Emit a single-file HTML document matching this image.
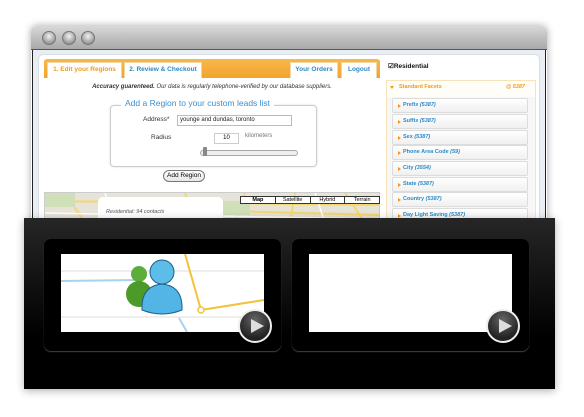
<!DOCTYPE html>
<html><head><style>
*{margin:0;padding:0;box-sizing:border-box}
body{width:584px;height:417px;background:#fff;position:relative;overflow:hidden;font-family:"Liberation Sans",sans-serif}
.abs{position:absolute}
.win{left:31px;top:26px;width:516px;height:200px;border-radius:6px 6px 0 0;box-shadow:0 0 8px rgba(0,0,0,.35);background:#fff}
.title{left:31px;top:26px;width:516px;height:24px;border-radius:6px 6px 0 0;background:linear-gradient(#d8d8d8,#a9a9a9);border-bottom:1px solid #555}
.btn{top:31px;width:14px;height:14px;border-radius:50%;background:radial-gradient(circle at 50% 35%,#f2f2f2,#9a9a9a 70%,#777);border:1px solid #777}
.content{left:32px;top:50px;width:514px;height:170px;background:#e8eef3;border-left:1px solid #222;border-right:1px solid #222}
.panel{left:38px;top:54px;width:502px;height:170px;background:#fff;border-radius:5px;border:1px solid #d7dde3}
.tabbar{left:44px;top:59px;width:336px;height:19px;background:linear-gradient(#f7b84b,#f2a42c);border-radius:3px 3px 0 0}
.tab{top:62px;height:16px;background:#fff;font-size:6.5px;font-weight:bold;color:#2a8ac6;text-align:center;line-height:14px;border:1px solid #f0d6a0;border-bottom:none}
.t{font-size:6.5px;color:#333}
.item{left:392px;width:136px;height:15px;border:1px solid #dcdcdc;border-radius:2px;background:linear-gradient(#fff,#f0f0f0);font-size:5.5px;font-weight:bold;color:#2a8ac6;line-height:13px;padding-left:10px}
.item:before{content:"";position:absolute;left:5px;top:5px;border-left:3px solid #f29a1c;border-top:2px solid transparent;border-bottom:2px solid transparent}
.black{left:24px;top:218px;width:531px;height:171px;background:linear-gradient(#262626,#000 70%);box-shadow:0 2px 8px rgba(0,0,0,.3)}
.vid{top:239px;width:237px;height:112px;background:#000;border-radius:7px;box-shadow:0 1px 1px #444}
.scr{top:254px;width:203px;height:78px;background:#fff}
.play{width:34px;height:34px;border-radius:50%;border:2px solid #eee;background:radial-gradient(circle at 50% 30%,#666,#222 70%)}
.play:after{content:"";position:absolute;left:11px;top:8px;border-left:13px solid #ddd;border-top:7.5px solid transparent;border-bottom:7.5px solid transparent}
</style></head><body>
<div class="abs win"></div>
<div class="abs content"></div>
<div class="abs title"></div>
<div class="abs btn" style="left:42px"></div>
<div class="abs btn" style="left:62px"></div>
<div class="abs btn" style="left:81px"></div>
<div class="abs panel"></div>
<div class="abs tabbar"></div>
<div class="abs tab" style="left:47px;width:75px;color:#f29a1c">1. Edit your Regions</div>
<div class="abs tab" style="left:124px;width:78px">2. Review &amp; Checkout</div>
<div class="abs tab" style="left:290px;width:48px">Your Orders</div>
<div class="abs tab" style="left:341px;width:36px">Logout</div>
<div class="abs t" style="left:44px;top:84px;width:336px;text-align:center;font-size:6px;font-style:italic"><b>Accuracy guarenteed.</b> Our data is regularly telephone-verified by our database suppliers.</div>
<div class="abs" style="left:110px;top:105px;width:207px;height:62px;border:1px solid #ccc;border-radius:4px;box-shadow:0 0 2px #ddd"></div>
<div class="abs" style="left:121px;top:98px;background:#fff;padding:0 4px;font-size:8.5px;color:#3d8fd0">Add a Region to your custom leads list</div>
<div class="abs t" style="left:143px;top:116px">Address*</div>
<div class="abs" style="left:177px;top:115px;width:115px;height:11px;border:1px solid #bbb;font-size:6px;line-height:9px;padding-left:2px;color:#222">younge and dundas, toronto</div>
<div class="abs t" style="left:151px;top:134px">Radius</div>
<div class="abs" style="left:214px;top:133px;width:25px;height:11px;border:1px solid #ccc;font-size:6px;line-height:9px;text-align:center">10</div>
<div class="abs t" style="left:245px;top:133px;color:#777;font-size:6px">kilometers</div>
<div class="abs" style="left:200px;top:150px;width:98px;height:6px;border:1px solid #aaa;border-radius:3px;background:#eee"></div>
<div class="abs" style="left:203px;top:147px;width:4px;height:9px;background:#888;border-radius:1px"></div>
<div class="abs" style="left:163px;top:170px;width:42px;height:12px;border:1px solid #777;border-radius:6px;font-size:6.5px;line-height:10px;text-align:center;background:linear-gradient(#fff,#e6e6e6)">Add Region</div>
<div class="abs" style="left:44px;top:192px;width:336px;height:30px;background:#e6e3d8;border:1px solid #ccc;overflow:hidden">
<svg width="336" height="30"><path d="M0 8 L336 12 M20 0 L40 30 M140 0 L150 30 M200 0 L190 30 M250 0 L245 30 M300 0 L320 30 M180 18 L336 22" stroke="#f5d76a" stroke-width="2" fill="none"/><path d="M0 20 L336 26 M60 0 L70 30 M270 0 L280 30" stroke="#fff" stroke-width="1.5"/><rect x="0" y="0" width="30" height="14" fill="#cfe0b8"/><rect x="175" y="8" width="30" height="14" fill="#cfe0b8"/></svg></div>
<div class="abs" style="left:98px;top:197px;width:125px;height:25px;background:#fff;border-radius:5px;font-size:5.5px;font-style:italic;color:#555;padding:12px 0 0 8px">Residential: 94 contacts</div>
<div class="abs" style="left:240px;top:196px;width:140px;height:8px;background:#fff;border:1px solid #333;font-size:5.5px;display:flex"><span style="flex:1;text-align:center;font-weight:bold;border-right:1px solid #333">Map</span><span style="flex:1;text-align:center;border-right:1px solid #333">Satellite</span><span style="flex:1;text-align:center;border-right:1px solid #333">Hybrid</span><span style="flex:1;text-align:center">Terrain</span></div>
<div class="abs" style="left:388px;top:62px;font-size:6.5px;font-weight:bold;color:#111">☑Residential</div>
<div class="abs" style="left:386px;top:80px;width:150px;height:140px;border:1px solid #f7e3b8;background:#f7f7f7"></div>
<div class="abs" style="left:387px;top:81px;width:148px;height:16px;background:#fffdf7;font-size:5.5px;font-weight:bold;color:#f29a1c;line-height:12px;padding-left:12px">Standard Facets<span style="position:absolute;right:10px;font-style:italic">@ 5387</span></div>
<div class="abs" style="left:390px;top:86px;border-top:3px solid #f29a1c;border-left:2px solid transparent;border-right:2px solid transparent"></div>
<div class="abs item" style="top:98px">Prefix <i>(5387)</i></div>
<div class="abs item" style="top:114px">Suffix <i>(5387)</i></div>
<div class="abs item" style="top:130px">Sex <i>(5387)</i></div>
<div class="abs item" style="top:145px">Phone Area Code <i>(59)</i></div>
<div class="abs item" style="top:161px">City <i>(3554)</i></div>
<div class="abs item" style="top:177px">State <i>(5387)</i></div>
<div class="abs item" style="top:192px">Country <i>(5387)</i></div>
<div class="abs item" style="top:208px">Day Light Saving <i>(5387)</i></div>
<div class="abs black"></div>
<div class="abs vid" style="left:44px"></div>
<div class="abs vid" style="left:292px"></div>
<div class="abs scr" style="left:61px">
<svg width="203" height="78" viewBox="0 0 203 78">
<line x1="0" y1="17" x2="203" y2="17" stroke="#ddd"/><line x1="0" y1="63" x2="203" y2="63" stroke="#ddd"/>
<path d="M0 27 L80 26" stroke="#a9d2ef" stroke-width="2"/>
<path d="M124 0 L140 56 L203 46" stroke="#f2c23a" stroke-width="2" fill="none"/>
<circle cx="140" cy="56" r="3" fill="#fff" stroke="#f2c23a" stroke-width="1.5"/>
<path d="M118 64 L126 78" stroke="#a9d2ef" stroke-width="2"/>
<circle cx="78" cy="20" r="8" fill="#5cae3a"/><ellipse cx="78" cy="40" rx="13" ry="13" fill="#4c9a2a"/>
<circle cx="101" cy="18" r="12" fill="#5bbde8" stroke="#1d5f8a"/>
<path d="M81 56 Q80 32 101 30 Q122 32 121 56 Q101 64 81 56Z" fill="#52b5e5" stroke="#1d5f8a"/>
</svg></div>
<div class="abs scr" style="left:309px"></div>
<div class="abs play" style="left:238px;top:309px"></div>
<div class="abs play" style="left:486px;top:309px"></div>
</body></html>
